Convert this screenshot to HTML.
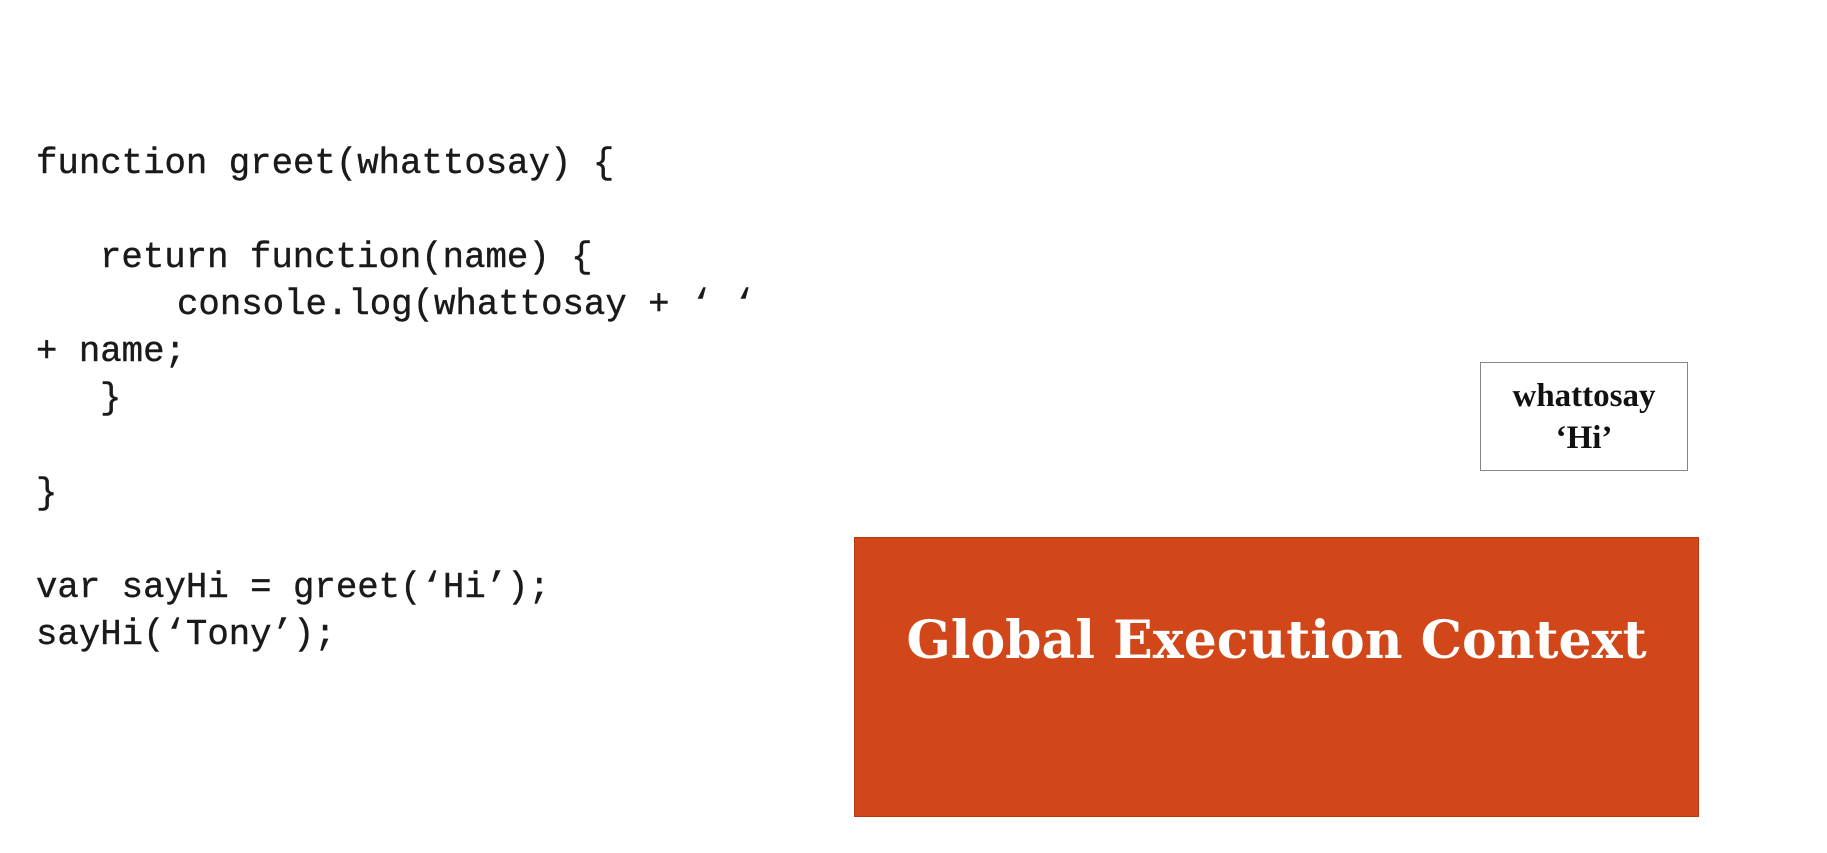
<!DOCTYPE html>
<html><head><meta charset="utf-8"><style>
html,body{margin:0;padding:0;background:#fff;width:1827px;height:853px;overflow:hidden;position:relative}
.l{position:absolute;font-family:"Liberation Mono",monospace;font-size:35.7px;color:#1a1a1a;white-space:pre;line-height:47px;height:47px;-webkit-text-stroke:0.4px #1a1a1a}
.box{position:absolute;left:1480px;top:362px;width:208px;height:109px;border:1px solid #888;box-sizing:border-box;text-align:center;font-family:"Liberation Serif",serif;font-size:33px;font-weight:bold;color:#111;line-height:42px;padding-top:12px}
.ctx{position:absolute;left:854px;top:537px;width:845px;height:280px;background:#d24719;border:1px solid #b53a12;box-sizing:border-box}
.t{position:absolute;left:854px;width:845px;top:605px;text-align:center;color:#fff;font-family:"DejaVu Serif","Liberation Serif",serif;font-weight:bold;font-size:52px;line-height:72px;letter-spacing:0}
</style></head><body>
<div class="l" style="left:36px;top:140px">function greet(whattosay) {</div>
<div class="l" style="left:100px;top:234px">return function(name) {</div>
<div class="l" style="left:177px;top:281px">console.log(whattosay + ‘ ‘</div>
<div class="l" style="left:36px;top:328px">+ name;</div>
<div class="l" style="left:100px;top:375px">}</div>
<div class="l" style="left:36px;top:470px">}</div>
<div class="l" style="left:36px;top:564px">var sayHi = greet(‘Hi’);</div>
<div class="l" style="left:36px;top:611px">sayHi(‘Tony’);</div>
<div class="box">whattosay<br>‘Hi’</div>
<div class="ctx"></div>
<div class="t">Global Execution Context</div>
</body></html>
